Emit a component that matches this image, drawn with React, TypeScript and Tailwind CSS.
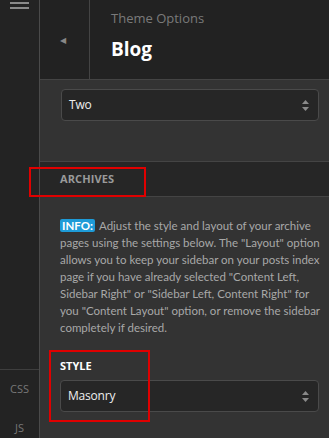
import React from "react";

function UpDown() {
  return (
    <svg width="9" height="13" viewBox="0 0 9 13" className="text-[#8a8a8a]">
      <path d="M4.5 1 L8 5 L1 5 Z" fill="currentColor" />
      <path d="M4.5 12 L8 8 L1 8 Z" fill="currentColor" />
    </svg>
  );
}

function SelectBox({ value }: { value: string }) {
  return (
    <div className="h-[32px] rounded-[4px] border border-[#4a4a4a] bg-[#262626] flex items-center justify-between pl-[7px] pr-[8px]">
      <span className="text-[12px] text-[#eeeeee] tracking-[-0.2px]">{value}</span>
      <UpDown />
    </div>
  );
}

const infoLines = [
  'pages using the settings below. The "Layout" option',
  "allows you to keep your sidebar on your posts index",
  'page if you have already selected "Content Left,',
  'Sidebar Right" or "Sidebar Left, Content Right" for',
  'you "Content Layout" option, or remove the sidebar',
  "completely if desired.",
];

export default function App() {
  return (
    <div
      className="w-[329px] h-[438px] overflow-hidden flex bg-[#333333]"
      style={{ fontFamily: '"Open Sans", "Noto Sans", sans-serif' }}
    >
      {/* left rail */}
      <div className="w-[40px] shrink-0 bg-[#232323] border-r border-[#4a4a4a] flex flex-col">
        <div className="flex flex-col items-center gap-[3px] mt-[2px]">
          <div className="w-[19px] h-[2px] bg-[#8a8a8a]" />
          <div className="w-[19px] h-[2px] bg-[#8a8a8a]" />
        </div>
        <div className="flex-1" />
        <div className="h-[66px] border-b border-[#3e3e3e]" />
        <div className="h-[38px] flex items-center justify-center text-[11px] text-[#777777]">CSS</div>
        <div className="h-[30px] flex items-end justify-center pb-[2px] text-[11px] text-[#777777]">JS</div>
      </div>

      {/* main */}
      <div className="flex-1 flex flex-col min-w-0">
        <div className="h-[80px] shrink-0 flex bg-[#222222] border-b border-[#444444]">
          <div className="w-[50px] border-r border-[#444444] flex items-center justify-center pr-[4px]">
            <span className="text-[8px] text-[#888888]">◀</span>
          </div>
          <div className="pl-[21px] pt-[9px]">
            <div className="text-[13px] text-[#7a7a7a] leading-[18px]">Theme Options</div>
            <div className="text-[19px] font-bold text-white leading-[26px] mt-[9px]">Blog</div>
          </div>
        </div>

        <div className="px-[21px] pr-[10px] pt-[9px] h-[81px] shrink-0">
          <SelectBox value="Two" />
        </div>

        <div className="h-[36px] shrink-0 bg-[#262626] border-t border-b border-[#444444] flex items-center pl-[20px] relative">
          <span className="text-[11px] font-bold text-[#9a9a9a] tracking-[0.1px]">ARCHIVES</span>
          <div className="absolute left-[-11px] top-[5px] w-[117px] h-[30px] border-2 border-[#e00000]" />
        </div>

        <div
          className="pl-[20px] pt-[20px] text-[11.5px] leading-[17px] text-[#a8a8a8] whitespace-nowrap"
          style={{ fontFamily: "Lato, sans-serif" }}
        >
          <div>
            <span className="bg-[#1e9bd7] text-white font-bold rounded-[2px] px-[2px] mr-[4px]">INFO:</span>
            Adjust the style and layout of your archive
          </div>
          {infoLines.map((l) => (
            <div key={l}>{l}</div>
          ))}
        </div>

        <div className="pl-[20px] pr-[10px] pt-[22px] relative">
          <div className="text-[11px] font-bold text-white leading-[16px] mb-[6px]">STYLE</div>
          <SelectBox value="Masonry" />
          <div className="absolute left-[9px] top-[14px] w-[101px] h-[72px] border-2 border-[#e00000]" />
        </div>
      </div>
    </div>
  );
}
